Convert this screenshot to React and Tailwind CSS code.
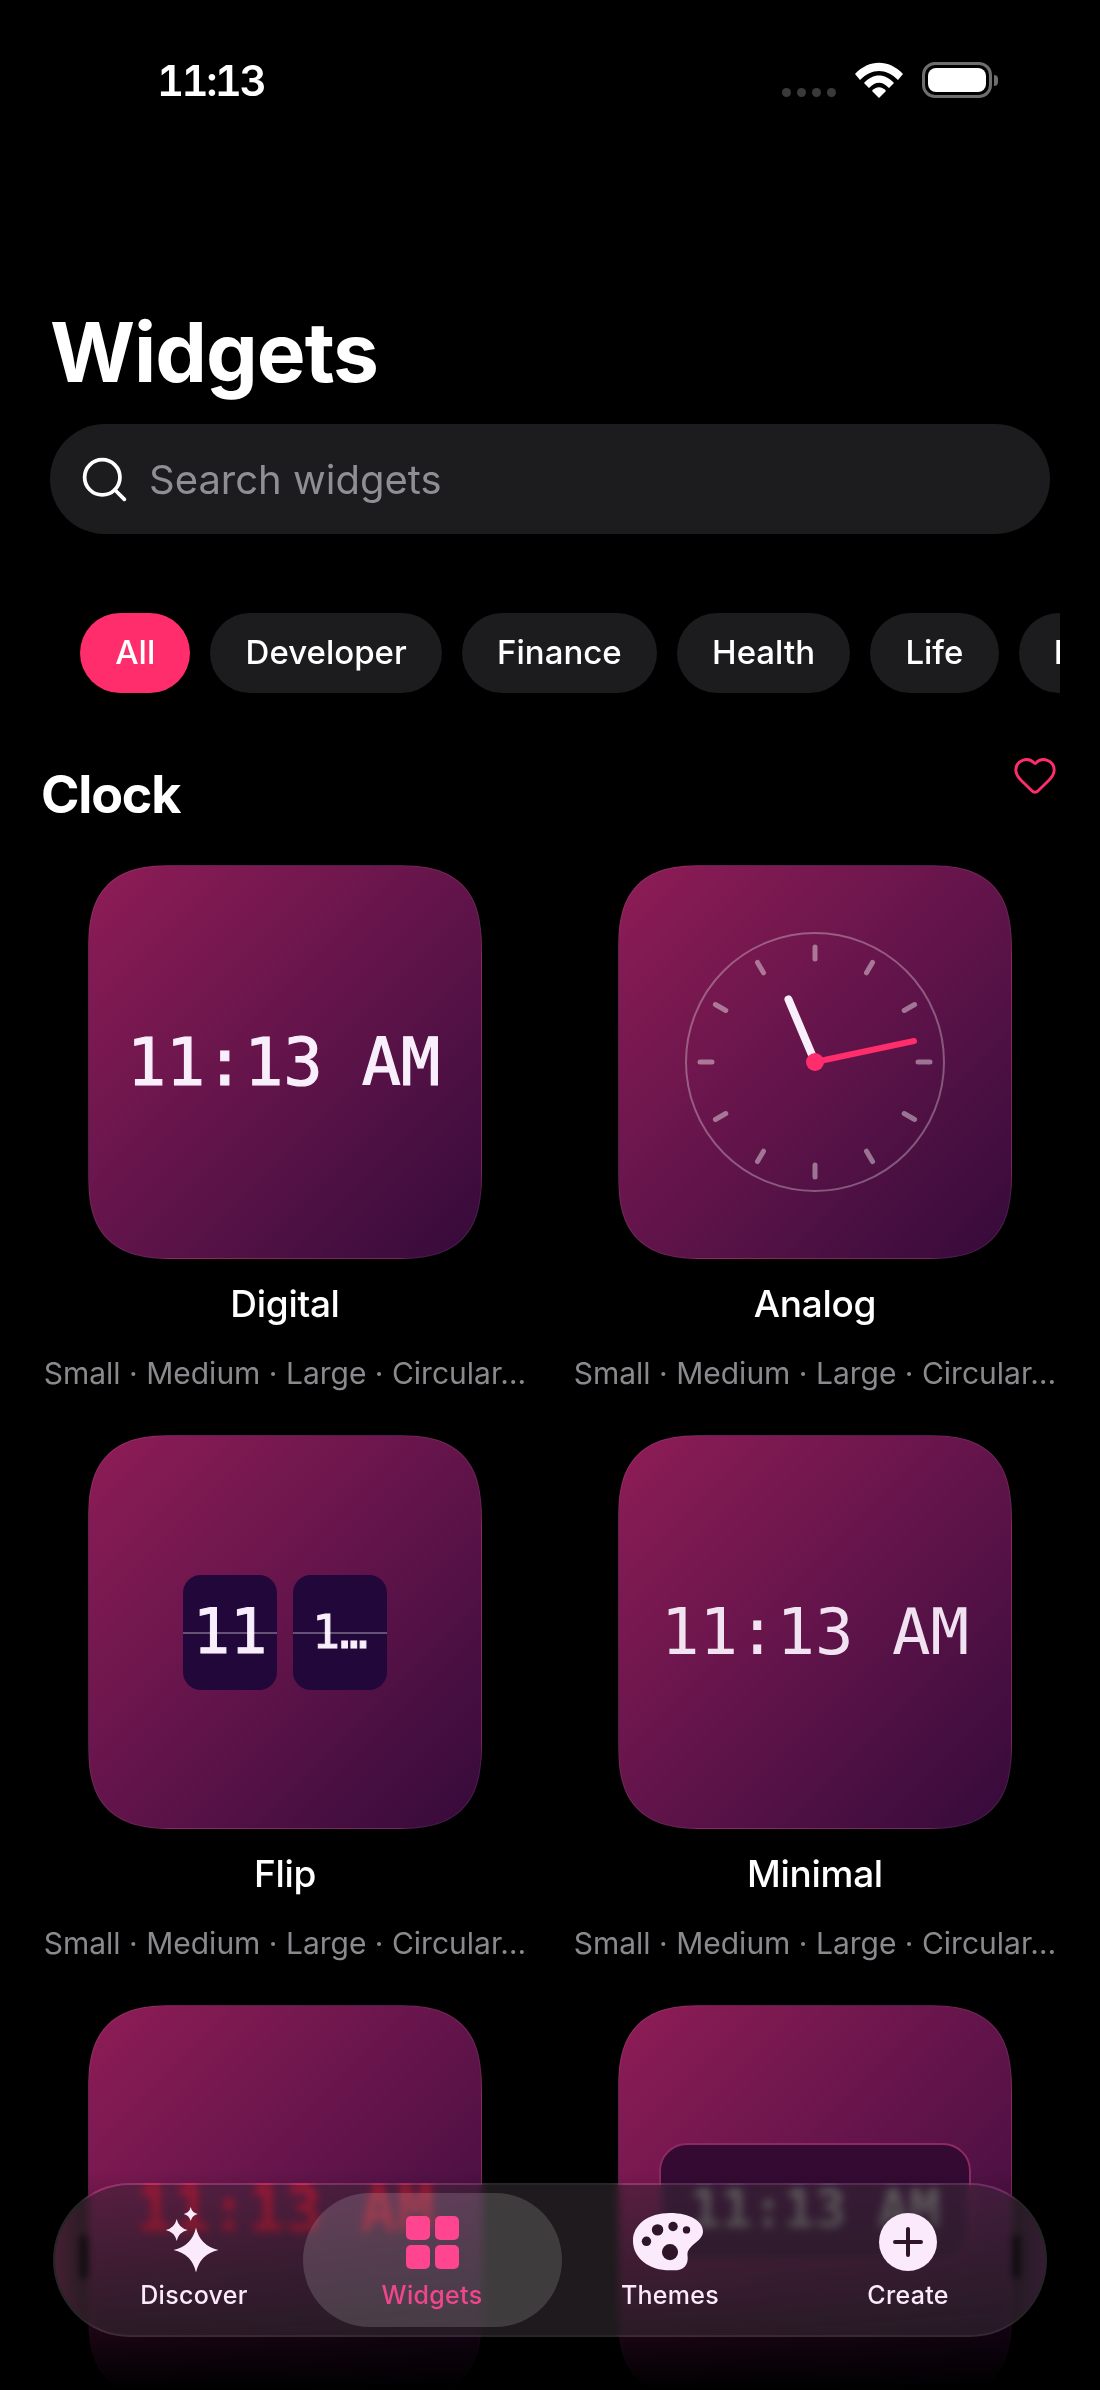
import React from 'react';
import { Heart, Search } from 'lucide-react';

const chips = ['All', 'Developer', 'Finance', 'Health', 'Life', 'Productivity'];
const ticks = [0, 30, 60, 90, 120, 150, 180, 210, 240, 270, 300, 330];
const MONO = "font-['DejaVu_Sans_Mono',monospace]";

const StatusBar = () => (
  <div className="flex h-[160px] items-center justify-between pl-[157px] pr-[102px]">
    <span className="text-[42px] font-semibold tabular-nums tracking-[-2.6px]">11:13</span>
    <div className="flex items-center">
      <div className="mt-[25px] mr-[19px] flex gap-[6px]">
        <span className="h-[9px] w-[9px] rounded-full bg-[#3a3a3c]"></span>
        <span className="h-[9px] w-[9px] rounded-full bg-[#3a3a3c]"></span>
        <span className="h-[9px] w-[9px] rounded-full bg-[#3a3a3c]"></span>
        <span className="h-[9px] w-[9px] rounded-full bg-[#3a3a3c]"></span>
      </div>
      <svg width="48" height="36" viewBox="0 0 48 36" className="mr-[19px]">
        <path d="M0 12 C14 -3 34 -3 48 12 L43 18 C31 6 17 6 5 18 Z" fill="#fff" />
        <path d="M9 21 C18 11 30 11 39 21 L34 26 C27 19 21 19 14 26 Z" fill="#fff" />
        <path d="M17 29 C21 24 27 24 31 29 L24 36 Z" fill="#fff" />
      </svg>
      <div className="flex h-[36px] w-[70px] items-center rounded-[13px] border-[3px] border-[#6e6e70] p-[3px]">
        <div className="h-full w-full rounded-[8px] bg-white"></div>
      </div>
      <div className="ml-[2px] h-[11px] w-[4px] rounded-r-full bg-[#6e6e70]"></div>
    </div>
  </div>
);

const Digital = () => (
  <span className={`${MONO} mr-[3px] text-[65px] leading-none text-[#f9eefb] [-webkit-text-stroke:1.2px_#f9eefb]`}>11:13 AM</span>
);

const Analog = () => (
  <svg width="264" height="264" viewBox="-132 -132 264 264">
    <circle cx="0" cy="0" r="129" fill="none" stroke="#fff" strokeOpacity="0.3" strokeWidth="2" />
    {ticks.map((a) => (
      <line key={a} x1="0" y1="-103" x2="0" y2="-115" stroke="#fff" strokeOpacity="0.42" strokeWidth="5" strokeLinecap="round" transform={`rotate(${a})`} />
    ))}
    <line x1="0" y1="0" x2="-26.5" y2="-62.5" stroke="#f9eefb" strokeWidth="8" strokeLinecap="round" />
    <line x1="0" y1="0" x2="99" y2="-21" stroke="#ff2d6b" strokeWidth="6" strokeLinecap="round" />
    <circle cx="0" cy="0" r="9" fill="#ff2d6b" />
  </svg>
);

const FlipCard = ({ children, size }) => (
  <div className={`${MONO} ${size} relative flex h-[115px] w-[94px] items-center justify-center rounded-[18px] bg-[#22083a] leading-none text-[#f9eefb] [-webkit-text-stroke:1px_#f9eefb]`}>
    {children}
    <div className="absolute inset-x-0 top-[57px] h-[2px] bg-white/30"></div>
  </div>
);

const Flip = () => (
  <div className="flex gap-[16px]">
    <FlipCard size="text-[62px]">11</FlipCard>
    <FlipCard size="text-[46px]">1…</FlipCard>
  </div>
);

const Minimal = () => (
  <span className={`${MONO} text-[64px] leading-none text-[#f9eefb]/95`}>11:13 AM</span>
);

const Led = () => (
  <span className={`${MONO} pt-[16px] text-[62px] font-bold leading-none text-[#ff1040]`}>11:13 AM</span>
);

const Panel = () => (
  <div className="flex h-[118px] w-[312px] items-center justify-center rounded-[28px] border-2 border-[#8d2a62] bg-[#340a33] pt-[14px]">
    <span className={`${MONO} text-[52px] font-bold leading-none text-[#b4b4b4]`}>11:13 AM</span>
  </div>
);

const widgets = [
  { name: 'Digital', preview: <Digital /> },
  { name: 'Analog', preview: <Analog /> },
  { name: 'Flip', preview: <Flip /> },
  { name: 'Minimal', preview: <Minimal /> },
  { preview: <Led /> },
  { preview: <Panel /> },
];

const WidgetCard = ({ name, preview }) => (
  <div className="flex flex-col items-center">
    <div className="flex h-[394px] w-[394px] items-center justify-center rounded-[90px] border border-white/[0.07] bg-linear-135 from-[#8f1c56] via-[#62144a] to-[#350a3a] [corner-shape:superellipse(1.5)]">
      {preview}
    </div>
    {name && (
      <>
        <div className="mt-[23px] text-[37px] font-medium leading-[44px] tracking-[-0.3px]">{name}</div>
        <div className="mt-[28px] w-[500px] text-center text-[30px] leading-[38px] text-[#8a8a8e]">Small · Medium · Large · Circular…</div>
      </>
    )}
  </div>
);

const Sparkle = ({ cx, cy, r }) => {
  const k = r * 0.18;
  return (
    <path
      d={`M${cx} ${cy - r} Q${cx + k} ${cy - k} ${cx + r} ${cy} Q${cx + k} ${cy + k} ${cx} ${cy + r} Q${cx - k} ${cy + k} ${cx - r} ${cy} Q${cx - k} ${cy - k} ${cx} ${cy - r} Z`}
      fill="#fbeafc"
    />
  );
};

const NavItem = ({ label, active, children }) => (
  <div className="flex flex-col items-center">
    <div className="flex h-[60px] translate-y-[3px] items-center justify-center">{children}</div>
    <span className={`mt-[10px] text-[25px] font-medium leading-[32px] tracking-[0.3px] ${active ? 'text-[#f0468c]' : 'text-[#fbeafc]'}`}>{label}</span>
  </div>
);

const BottomNav = () => (
  <div className="absolute bottom-[53px] left-[53px] flex h-[154px] w-[994px] items-center overflow-hidden rounded-full border-2 border-white/15 bg-[#322c30]/60 bg-clip-padding backdrop-blur-[4px] backdrop-saturate-150">
    <div className="absolute inset-y-0 left-0 w-[44px] bg-linear-to-r from-[#6a2548]/50 to-transparent"></div>
    <div className="absolute inset-y-0 right-0 w-[44px] bg-linear-to-l from-[#4a2048]/50 to-transparent"></div>
    <div className="absolute left-[24px] top-[50px] h-[44px] w-[9px] rounded-full bg-black/50 blur-[3px]"></div>
    <div className="absolute right-[24px] top-[50px] h-[44px] w-[9px] rounded-full bg-black/50 blur-[3px]"></div>
    <div className="absolute left-[248px] top-[8px] h-[134px] w-[259px] rounded-[67px] bg-white/15"></div>
    <div className="relative grid w-full grid-cols-[238px_238px_238px_238px] pl-[20px]">
      <NavItem label="Discover">
        <svg width="70" height="66" viewBox="0 0 70 66" className="-translate-y-[3px] overflow-visible">
          <Sparkle cx={37} cy={44} r={22.5} />
          <Sparkle cx={17.7} cy={24} r={11} />
          <Sparkle cx={31.7} cy={8} r={7} />
        </svg>
      </NavItem>
      <NavItem label="Widgets" active>
        <svg width="53" height="53" viewBox="0 0 53 53">
          <rect x="0" y="0" width="24" height="24" rx="5" fill="#ff4590" />
          <rect x="29" y="0" width="24" height="24" rx="5" fill="#ff4590" />
          <rect x="0" y="29" width="24" height="24" rx="5" fill="#ff4590" />
          <rect x="29" y="29" width="24" height="24" rx="5" fill="#ff4590" />
        </svg>
      </NavItem>
      <NavItem label="Themes">
        <svg width="70" height="58" viewBox="220 130 208 172" className="-translate-x-[2px]">
          <path d="M330 130 C390 130 428 155 428 185 C428 215 380 225 382 255 C386 285 370 302 335 300 C270 302 220 265 220 212 C220 165 265 130 330 130 Z" fill="#fbeafc" />
          <circle cx="260" cy="214" r="14" fill="#2f1528" />
          <circle cx="293" cy="180" r="17" fill="#2f1528" />
          <circle cx="339" cy="170" r="14" fill="#2f1528" />
          <circle cx="379" cy="180" r="11" fill="#2f1528" />
          <circle cx="330" cy="246" r="24" fill="#2f1528" />
        </svg>
      </NavItem>
      <NavItem label="Create">
        <svg width="58" height="58" viewBox="0 0 58 58">
          <circle cx="29" cy="29" r="29" fill="#fbeafc" />
          <path d="M16 29 H42 M29 16 V42" stroke="#2f1528" strokeWidth="4" strokeLinecap="round" />
        </svg>
      </NavItem>
    </div>
  </div>
);

export default function App() {
  return (
    <div className="relative h-[2390px] w-[1100px] overflow-hidden bg-black font-['Inter',sans-serif] text-white">
      <StatusBar />
      <h1 className="mt-[145px] pl-[50px] text-[82px] font-bold leading-[96px] tracking-[-1px]">Widgets</h1>
      <div className="mx-[50px] mt-[23px] flex h-[110px] items-center rounded-full bg-[#1c1c1e] pl-[28px]">
        <Search size={53} strokeWidth={1.7} className="text-white" />
        <span className="ml-[18px] mt-[2px] text-[40px] text-[#8e8e93]">Search widgets</span>
      </div>
      <div className="ml-[80px] mt-[79px] flex w-[980px] gap-[20px] overflow-hidden">
        {chips.map((c, i) => (
          <div key={c} className={`flex h-[80px] shrink-0 items-center rounded-full px-[35.2px] text-[33px] font-medium ${i === 0 ? 'bg-[#ff2d6b]' : 'bg-[#1c1c1e]'}`}>
            {c}
          </div>
        ))}
      </div>
      <div className="mt-[59px] flex items-start justify-between pl-[41px] pr-[42px]">
        <h2 className="mt-[13px] text-[52px] font-bold leading-[60px] tracking-[-1.2px]">Clock</h2>
        <Heart size={46} strokeWidth={1.5} className="text-[#ff2d6b]" />
      </div>
      <div className="mt-[40px] grid grid-cols-2 px-[20px]">
        {widgets.map((w, i) => (
          <div key={i} className="h-[570px]">
            <WidgetCard name={w.name} preview={w.preview} />
          </div>
        ))}
      </div>
      <div className="pointer-events-none absolute inset-x-0 bottom-0 h-[220px] bg-linear-to-b from-transparent to-black"></div>
      <BottomNav />
    </div>
  );
}
